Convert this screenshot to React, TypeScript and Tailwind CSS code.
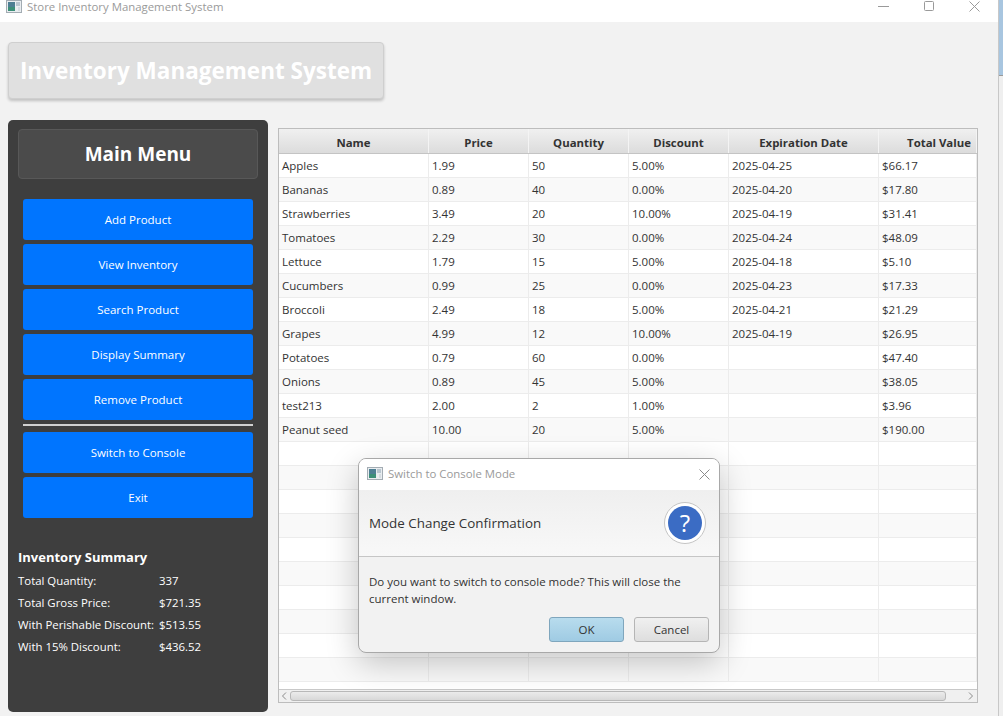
const font = { fontFamily: '"Open Sans", "Noto Sans", sans-serif' };

const rows: string[][] = [
  ["Apples", "1.99", "50", "5.00%", "2025-04-25", "$66.17"],
  ["Bananas", "0.89", "40", "0.00%", "2025-04-20", "$17.80"],
  ["Strawberries", "3.49", "20", "10.00%", "2025-04-19", "$31.41"],
  ["Tomatoes", "2.29", "30", "0.00%", "2025-04-24", "$48.09"],
  ["Lettuce", "1.79", "15", "5.00%", "2025-04-18", "$5.10"],
  ["Cucumbers", "0.99", "25", "0.00%", "2025-04-23", "$17.33"],
  ["Broccoli", "2.49", "18", "5.00%", "2025-04-21", "$21.29"],
  ["Grapes", "4.99", "12", "10.00%", "2025-04-19", "$26.95"],
  ["Potatoes", "0.79", "60", "0.00%", "", "$47.40"],
  ["Onions", "0.89", "45", "5.00%", "", "$38.05"],
  ["test213", "2.00", "2", "1.00%", "", "$3.96"],
  ["Peanut seed", "10.00", "20", "5.00%", "", "$190.00"],
  ["", "", "", "", "", ""],
  ["", "", "", "", "", ""],
  ["", "", "", "", "", ""],
  ["", "", "", "", "", ""],
  ["", "", "", "", "", ""],
  ["", "", "", "", "", ""],
  ["", "", "", "", "", ""],
  ["", "", "", "", "", ""],
  ["", "", "", "", "", ""],
  ["", "", "", "", "", ""],
];

const widths = ["w-[150px]", "w-[100px]", "w-[100px]", "w-[100px]", "w-[150px]", "w-[98px]"];
const headers = ["Name", "Price", "Quantity", "Discount", "Expiration Date", "Total Value"];

function WinIcon() {
  return (
    <svg width="16" height="13" viewBox="0 0 16 13">
      <rect x="0.5" y="0.5" width="15" height="12" fill="#e9edf0" stroke="#a3acb3" />
      <rect x="2" y="2" width="7" height="9" fill="#4d7f93" />
      <rect x="2" y="7" width="7" height="4" fill="#3c8f78" />
      <rect x="10" y="2" width="4" height="4" fill="#b9c6cf" />
      <rect x="12" y="7" width="2" height="4" fill="#d5dce1" />
    </svg>
  );
}

function MenuButton({ label }: { label: string }) {
  return (
    <div className="flex h-[41px] w-[230px] items-center justify-center rounded-[3px] bg-[#0075ff] text-[11.5px] text-white">
      {label}
    </div>
  );
}

function SummaryRow({ label, value }: { label: string; value: string }) {
  return (
    <div className="flex h-[22px] items-center text-[11.4px] text-white">
      <span className="w-[141px] whitespace-nowrap">{label}</span>
      <span>{value}</span>
    </div>
  );
}

export default function App() {
  return (
    <div className="relative flex h-[716px] w-[1003px] overflow-hidden bg-white" style={font}>
      <div className="relative flex h-full w-[998px] flex-col bg-[#f2f2f2]">
        <div className="relative flex h-[22px] shrink-0 items-start justify-between bg-white">
          <div className="flex h-[13px] items-center gap-[5px] pl-[6px] text-[11.4px] text-[#9a9a9a]">
            <WinIcon />
            <span>Store Inventory Management System</span>
          </div>
          <div className="flex items-start gap-[35px] pr-[18px] pt-[1px]">
            <svg width="11" height="11" viewBox="0 0 11 11"><path d="M0 5.5H11" stroke="#9a9a9a" /></svg>
            <svg width="10" height="10" viewBox="0 0 10 10"><rect x="0.5" y="0.5" width="9" height="9" rx="1" fill="none" stroke="#9a9a9a" /></svg>
            <svg width="11" height="11" viewBox="0 0 11 11"><path d="M0.5 0.5L10.5 10.5M10.5 0.5L0.5 10.5" stroke="#9a9a9a" /></svg>
          </div>
        </div>

        <div className="flex flex-col px-[8px] pt-[20px]">
          <div className="flex h-[57px] w-[376px] items-center justify-center whitespace-nowrap rounded-[4px] border border-[#cfcfcf] bg-[#e0e0e0] text-[22.5px] font-bold text-white shadow-[0_2px_3px_rgba(0,0,0,0.2)]">
            Inventory Management System
          </div>

          <div className="mt-[21px] flex gap-[10px]">
            <div className="flex h-[592px] w-[260px] flex-col rounded-[5px] bg-[#3e3e3e] px-[10px] pt-[9px]">
              <div className="flex h-[50px] w-[240px] items-center justify-center rounded-[4px] border border-[#585858] bg-[#4b4b4b] pt-[1px] text-[19px] font-bold text-white">
                Main Menu
              </div>
              <div className="mt-[20px] flex flex-col gap-[4px] pl-[5px]">
                <MenuButton label="Add Product" />
                <MenuButton label="View Inventory" />
                <MenuButton label="Search Product" />
                <MenuButton label="Display Summary" />
                <MenuButton label="Remove Product" />
                <div className="h-[2px] w-[230px] bg-[#d0d0d0]" />
                <div className="mt-[2px] flex flex-col gap-[4px]">
                  <MenuButton label="Switch to Console" />
                  <MenuButton label="Exit" />
                </div>
              </div>
              <div className="mt-[29px] flex h-[22px] items-center text-[13px] font-bold text-white">Inventory Summary</div>
              <div className="mt-[1px] flex flex-col">
                <SummaryRow label="Total Quantity:" value="337" />
                <SummaryRow label="Total Gross Price:" value="$721.35" />
                <SummaryRow label="With Perishable Discount:" value="$513.55" />
                <SummaryRow label="With 15% Discount:" value="$436.52" />
              </div>
            </div>

            <div className="mt-[8px] flex h-[575px] w-[700px] flex-col overflow-hidden border border-[#bdbdbd] bg-white">
              <div className="flex h-[25px] shrink-0 border-b border-[#c4c4c4] bg-gradient-to-b from-[#f0f0f0] to-[#dcdcdc]">
                {headers.map((h, i) => (
                  <div
                    key={h}
                    className={`${widths[i]} flex shrink-0 items-center justify-center whitespace-nowrap border-r border-[#f4f4f4] pt-[3px] text-[11.4px] font-bold text-[#333333] ${i === 5 ? "pl-[23px]" : ""}`}
                  >
                    {h}
                  </div>
                ))}
              </div>
              <div className="min-h-0 flex-1 overflow-hidden">
                {rows.map((r, ri) => (
                  <div key={ri} className={`flex h-[24px] border-b border-[#ececec] ${ri % 2 === 0 ? "bg-white" : "bg-[#f9f9f9]"}`}>
                    {r.map((c, ci) => (
                      <div
                        key={ci}
                        className={`${widths[ci]} flex shrink-0 items-center border-r border-[#ececec] pl-[3px] pt-[1px] text-[11.5px] text-[#333333]`}
                      >
                        {c}
                      </div>
                    ))}
                  </div>
                ))}
              </div>
              <div className="flex h-[13px] shrink-0 items-center border-t border-[#c8c8c8] bg-[#f0f0f0]">
                <svg className="ml-[2px]" width="6" height="8" viewBox="0 0 6 8"><path d="M5 0.5L1.5 4L5 7.5" fill="none" stroke="#8a8a8a" /></svg>
                <div className="ml-[3px] h-[10px] w-[656px] rounded-[3px] border border-[#b8b8b8] bg-gradient-to-b from-[#ececec] to-[#d8d8d8]" />
                <svg className="ml-[22px]" width="6" height="8" viewBox="0 0 6 8"><path d="M1 0.5L4.5 4L1 7.5" fill="none" stroke="#8a8a8a" /></svg>
              </div>
            </div>
          </div>
        </div>

        <div className="absolute left-[358px] top-[458px] flex h-[195px] w-[362px] flex-col overflow-hidden rounded-[8px] border border-[#a8a8a8] bg-[#f2f2f2] shadow-[0_10px_32px_rgba(0,0,0,0.22)]">
          <div className="flex h-[31px] shrink-0 items-center justify-between bg-white pb-[1px] pl-[8px] pr-[9px]">
            <div className="flex items-center gap-[5px] text-[11.4px] text-[#9a9a9a]">
              <WinIcon />
              <span>Switch to Console Mode</span>
            </div>
            <svg width="11" height="11" viewBox="0 0 11 11"><path d="M0.5 0.5L10.5 10.5M10.5 0.5L0.5 10.5" stroke="#8a8a8a" /></svg>
          </div>
          <div className="flex h-[67px] shrink-0 items-center justify-between border-b border-[#c6c6c6] bg-gradient-to-b from-[#efefef] to-[#f8f8f8] pl-[10px] pr-[13px]">
            <span className="text-[13.4px] text-[#333333]">Mode Change Confirmation</span>
            <div className="flex h-[42px] w-[42px] items-center justify-center rounded-full border border-[#c4c4c4] bg-white">
              <div className="flex h-[34px] w-[34px] items-center justify-center rounded-full bg-[#3b6cc4] text-[24px] leading-none text-white">?</div>
            </div>
          </div>
          <div className="px-[10px] pt-[16px] text-[11.5px] leading-[17px] text-[#333333]">
            Do you want to switch to console mode? This will close the current window.
          </div>
          <div className="mt-[10px] flex justify-end gap-[10px] pr-[10px]">
            <div className="flex h-[25px] w-[75px] items-center justify-center rounded-[3px] border border-[#7fa6bd] bg-gradient-to-b from-[#b8dcee] to-[#9fcbe3] text-[11.5px] text-[#333333]">OK</div>
            <div className="flex h-[25px] w-[75px] items-center justify-center rounded-[3px] border border-[#b5b5b5] bg-gradient-to-b from-[#f0f0f0] to-[#dedede] text-[11.5px] text-[#333333]">Cancel</div>
          </div>
        </div>
      </div>

      <div className="flex h-full w-[5px] flex-col border-l border-[#c8c8c8]">
        <div className="h-[76px] border-b border-[#9a9a9a] bg-[#a8c6e0]" />
        <div className="flex-1 bg-[#efefef]" />
      </div>
    </div>
  );
}
